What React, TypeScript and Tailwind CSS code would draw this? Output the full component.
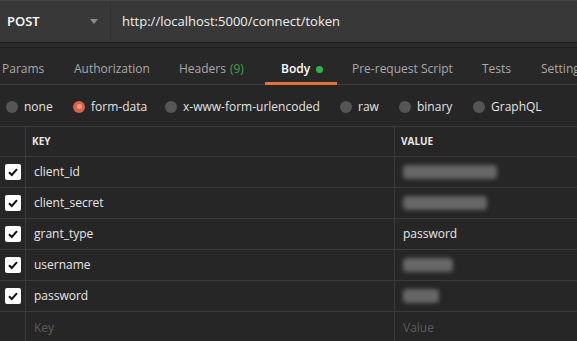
import React from "react";

const tabs = [
  { label: "Params", w: "w-[72px]" },
  { label: "Authorization", w: "w-[105px]" },
  { label: "Headers", w: "w-[86px]", count: "(9)" },
  { label: "Body", w: "w-[87px]", active: true },
  { label: "Pre-request Script", w: "w-[130px]" },
  { label: "Tests", w: "w-[59px]" },
  { label: "Settings", w: "w-[60px]" },
];

const bodyTypes = [
  { label: "none", w: "w-[67px]" },
  { label: "form-data", w: "w-[92px]", on: true },
  { label: "x-www-form-urlencoded", w: "w-[175px]" },
  { label: "raw", w: "w-[59px]" },
  { label: "binary", w: "w-[74px]" },
  { label: "GraphQL", w: "w-[80px]" },
];

const rows: { key: string; value?: string; blur?: string }[] = [
  { key: "client_id", blur: "w-[94px]" },
  { key: "client_secret", blur: "w-[84px]" },
  { key: "grant_type", value: "password" },
  { key: "username", blur: "w-[50px]" },
  { key: "password", blur: "w-[36px]" },
];

const Check = () => (
  <div className="w-4 h-4 rounded-[2px] bg-white flex items-center justify-center">
    <svg width="12" height="12" viewBox="0 0 12 12">
      <path d="M2 6.2 L4.8 9 L10 3.2" fill="none" stroke="#111" strokeWidth="2" />
    </svg>
  </div>
);

export default function App() {
  return (
    <div
      className="w-[577px] h-[341px] overflow-hidden bg-[#262626] text-[#d8d8d8] text-[12px]"
      style={{ fontFamily: '"Open Sans", sans-serif' }}
    >
      {/* url bar */}
      <div className="h-[42px] bg-[#383838] flex items-center border-t border-[#444] text-[13px]">
        <div className="w-[111px] h-full flex items-center justify-between pl-[7px] pr-[12px] border-r border-[#333]">
          <span className="font-semibold text-white">POST</span>
          <svg width="8" height="5" viewBox="0 0 8 5">
            <path d="M0 0 H8 L4 5 Z" fill="#8a8a8a" />
          </svg>
        </div>
        <span className="pl-[11px] text-[#eeeeee]">http://localhost:5000/connect/token</span>
      </div>
      <div className="h-[6px] bg-[#2b2b2b] border-t border-[#1e1e1e] border-b border-b-[#1e1e1e]" />

      {/* tabs */}
      <div className="h-[37px] flex border-b border-[#3e3e3e] pl-[2px] bg-[#282828]">
        {tabs.map((t) => (
          <div key={t.label} className={`${t.w} shrink-0 h-full flex items-center pt-[6px] relative whitespace-nowrap`}>
            <div className={`flex items-center ${t.active ? "pl-[16px]" : ""}`}>
              <span className={t.active ? "text-white font-semibold" : "text-[#a8a8a8]"}>{t.label}</span>
              {t.count && <span className="ml-[4px] text-[#3fa34d]">{t.count}</span>}
              {t.active && <span className="ml-[6px] w-[7px] h-[7px] rounded-full bg-[#2fb24b]" />}
            </div>
            {t.active && <div className="absolute bottom-[-1px] left-0 w-[72px] h-[3px] bg-[#e2733b]" />}
          </div>
        ))}
      </div>

      {/* body types */}
      <div className="h-[42px] flex items-center pl-[6px] pt-[2px] border-b border-[#3a3a3a]">
        {bodyTypes.map((b) => (
          <div key={b.label} className={`${b.w} shrink-0 flex items-center gap-[6px] whitespace-nowrap`}>
            {b.on ? (
              <span className="w-[12px] h-[12px] rounded-full bg-[#d9604a] flex items-center justify-center">
                <span className="w-[5px] h-[5px] rounded-full bg-[#f39a86]" />
              </span>
            ) : (
              <span className="w-[12px] h-[12px] rounded-full bg-[#555555]" />
            )}
            <span className="text-[#e4e4e4]">{b.label}</span>
          </div>
        ))}
      </div>

      {/* table */}
      <div className="grid grid-cols-[26px_369px_1fr]">
        <div className="h-[30px] border-r border-b border-[#3a3a3a]" />
        <div className="h-[30px] border-r border-b border-[#3a3a3a] flex items-center pl-[6px] text-[10px] font-bold text-[#e8e8e8]">
          KEY
        </div>
        <div className="h-[30px] border-b border-[#3a3a3a] flex items-center pl-[6px] text-[10px] font-bold text-[#e8e8e8]">
          VALUE
        </div>
        {rows.map((r) => (
          <React.Fragment key={r.key}>
            <div className="h-[31px] border-r border-b border-[#3a3a3a] flex items-center justify-center">
              <Check />
            </div>
            <div className="h-[31px] border-r border-b border-[#3a3a3a] flex items-center pl-[8px] text-[#e6e6e6]">
              {r.key}
            </div>
            <div className="h-[31px] border-b border-[#3a3a3a] flex items-center pl-[8px] text-[#e6e6e6]">
              {r.value ?? (
                <div className={`${r.blur} h-[14px] bg-[#666666] blur-[2px] rounded-sm`} />
              )}
            </div>
          </React.Fragment>
        ))}
        <div className="h-[31px] border-r border-[#3a3a3a]" />
        <div className="h-[31px] border-r border-[#3a3a3a] flex items-center pl-[8px] text-[#5c5c5c]">Key</div>
        <div className="h-[31px] flex items-center pl-[8px] text-[#5c5c5c]">Value</div>
      </div>
    </div>
  );
}
